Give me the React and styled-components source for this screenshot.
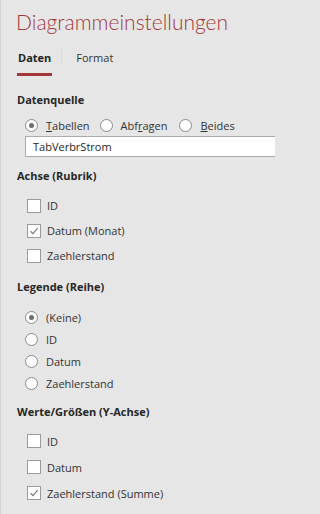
import React from "react";
import styled, { createGlobalStyle } from "styled-components";

const GlobalStyle = createGlobalStyle`
  html, body {
    margin: 0;
    padding: 0;
    background: #e6e6e6;
  }
  body {
    font-family: "Open Sans", "Noto Sans", sans-serif;
  }
`;

const Pane = styled.div`
  width: 275px;
  height: 514px;
  box-sizing: border-box;
  background: #e6e6e6;
  border-left: 1px solid #d4d4d4;
  overflow: hidden;
  color: #333;
`;

const Title = styled.h1`
  margin: 0;
  padding: 6px 0 0 15px;
  height: 40px;
  box-sizing: border-box;
  font-family: "Lato", "Open Sans", sans-serif;
  font-size: 21px;
  line-height: 32px;
  font-weight: 300;
  color: #a4373a;
  white-space: nowrap;
`;

const Tabs = styled.div`
  display: flex;
  align-items: flex-end;
  padding-left: 16px;
  height: 36px;
`;

const Tab = styled.div`
  font-size: 11px;
  line-height: 18px;
  padding: 0 1px 6px;
  font-weight: ${(p) => (p.$active ? 700 : 400)};
  color: ${(p) => (p.$active ? "#222" : "#333")};
  border-bottom: 3px solid ${(p) => (p.$active ? "#a4373a" : "transparent")};
`;

const TabSep = styled.div`
  width: 1px;
  height: 17px;
  margin: 0 13px 12px 9px;
  background: #dadada;
`;

const Section = styled.section`
  margin-top: ${(p) => p.$top}px;
`;

const Heading = styled.h2`
  margin: 0;
  padding-left: 16px;
  height: 20px;
  font-size: 11px;
  line-height: 20px;
  font-weight: 700;
  color: #262626;
`;

const List = styled.div`
  display: flex;
  flex-direction: column;
  padding-top: ${(p) => p.$top}px;
`;

const Row = styled.label`
  display: flex;
  align-items: center;
  height: ${(p) => p.$h}px;
  padding-left: ${(p) => p.$indent}px;
  font-size: 11px;
  color: #333;
  white-space: nowrap;
`;

const InlineRow = styled.div`
  display: flex;
  align-items: center;
  height: 20px;
  margin-top: 5px;
  padding-left: 24px;
  font-size: 11px;
  color: #333;
  white-space: nowrap;
`;

const RadioItem = styled.span`
  display: flex;
  align-items: center;
  margin-right: ${(p) => p.$gap}px;
`;

const RadioCircle = styled.span`
  width: 11px;
  height: 11px;
  border: 1px solid #8a8a8a;
  border-radius: 50%;
  background: #fff;
  display: flex;
  align-items: center;
  justify-content: center;
  margin-right: 8px;
  flex: none;
  &::after {
    content: "";
    width: 5px;
    height: 5px;
    border-radius: 50%;
    background: ${(p) => (p.$on ? "#6d6d6d" : "transparent")};
  }
`;

const Box = styled.span`
  width: 12px;
  height: 12px;
  border: 1px solid #9a9a9a;
  background: #fff;
  margin-right: 6px;
  flex: none;
  display: flex;
  align-items: center;
  justify-content: center;
`;

const TextField = styled.div`
  margin: 1px 0 0 24px;
  height: 21px;
  box-sizing: border-box;
  border: 1px solid #ababab;
  border-right: none;
  background: #fff;
  font-size: 11px;
  line-height: 19px;
  padding-left: 7px;
  color: #262626;
`;

function Radio({ on, children, gap = 0 }) {
  return (
    <RadioItem $gap={gap}>
      <RadioCircle $on={on} />
      <span>{children}</span>
    </RadioItem>
  );
}

function Check({ on }) {
  return (
    <Box>
      {on && (
        <svg width="10" height="10" viewBox="0 0 10 10">
          <path d="M1.5 5.2 L4 7.6 L8.6 2.2" fill="none" stroke="#7a7a7a" strokeWidth="1.2" />
        </svg>
      )}
    </Box>
  );
}

function CheckList({ items, rowHeight, top }) {
  return (
    <List $top={top}>
      {items.map(([label, on]) => (
        <Row key={label} $h={rowHeight} $indent={26}>
          <Check on={on} />
          {label}
        </Row>
      ))}
    </List>
  );
}

function RadioList({ items, rowHeight, top }) {
  return (
    <List $top={top}>
      {items.map(([label, on]) => (
        <Row key={label} $h={rowHeight} $indent={24}>
          <Radio on={on}>{label}</Radio>
        </Row>
      ))}
    </List>
  );
}

export default function App() {
  return (
    <>
      <GlobalStyle />
      <Pane>
        <Title>Diagrammeinstellungen</Title>
        <Tabs>
          <Tab $active>Daten</Tab>
          <TabSep />
          <Tab>Format</Tab>
        </Tabs>

        <Section $top={14}>
          <Heading>Datenquelle</Heading>
          <InlineRow>
            <Radio on gap={10}>
              <u>T</u>abellen
            </Radio>
            <Radio gap={12}>
              Abf<u>r</u>agen
            </Radio>
            <Radio>
              <u>B</u>eides
            </Radio>
          </InlineRow>
          <TextField>TabVerbrStrom</TextField>
        </Section>

        <Section $top={9}>
          <Heading>Achse (Rubrik)</Heading>
          <CheckList
            top={7}
            rowHeight={25}
            items={[
              ["ID", false],
              ["Datum (Monat)", true],
              ["Zaehlerstand", false],
            ]}
          />
        </Section>

        <Section $top={9}>
          <Heading>Legende (Reihe)</Heading>
          <RadioList
            top={9}
            rowHeight={22}
            items={[
              ["(Keine)", true],
              ["ID", false],
              ["Datum", false],
              ["Zaehlerstand", false],
            ]}
          />
        </Section>

        <Section $top={8}>
          <Heading>Werte/Größen (Y-Achse)</Heading>
          <CheckList
            top={6}
            rowHeight={26}
            items={[
              ["ID", false],
              ["Datum", false],
              ["Zaehlerstand (Summe)", true],
            ]}
          />
        </Section>
      </Pane>
    </>
  );
}
